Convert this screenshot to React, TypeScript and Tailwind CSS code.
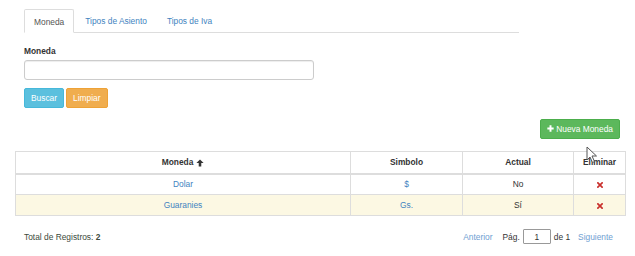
import React from "react";

const rows = [
  { moneda: "Dolar", simbolo: "$", actual: "No", warn: false },
  { moneda: "Guaranies", simbolo: "Gs.", actual: "Sí", warn: true },
];

function RemoveIcon() {
  return (
    <svg width="6" height="6" viewBox="0 0 10 10" className="inline-block">
      <path d="M1.5 1.5 L8.5 8.5 M8.5 1.5 L1.5 8.5" stroke="#c9302c" strokeWidth="2.8" strokeLinecap="square" />
    </svg>
  );
}

function ArrowUp() {
  return (
    <svg width="8" height="8" viewBox="0 0 10 10" className="inline-block ml-[3px] -mt-[1px]">
      <path d="M5 0.5 L9.5 5 L6.6 5 L6.6 9.5 L3.4 9.5 L3.4 5 L0.5 5 Z" fill="#333" />
    </svg>
  );
}

function Plus() {
  return (
    <svg width="7" height="7" viewBox="0 0 10 10" className="inline-block mr-[2px] -mt-[1px]">
      <path d="M3.6 0.5 H6.4 V3.6 H9.5 V6.4 H6.4 V9.5 H3.6 V6.4 H0.5 V3.6 H3.6 Z" fill="#fff" />
    </svg>
  );
}

function Cursor() {
  return (
    <svg width="13" height="18" viewBox="0 0 13 18" className="absolute left-[586px] top-[146px]">
      <path d="M1 1 L1 14 L4 11 L6.5 16.5 L8.5 15.5 L6 10 L10.5 10 Z" fill="#fff" stroke="#555" strokeWidth="1" strokeLinejoin="round" />
    </svg>
  );
}

export default function App() {
  return (
    <div
      className="relative w-[635px] h-[256px] bg-white text-[#333] text-[8.4px] leading-[12px] px-[15px] pt-[9px] overflow-hidden"
      style={{ fontFamily: '"Liberation Sans", Arial, sans-serif' }}
    >
      <div className="pl-[9px]">
        {/* Tabs */}
        <div className="flex w-[495px] h-[24px] border-b border-[#ddd]">
          <div className="h-[24px] px-[9px] pt-[6px] border border-[#ddd] border-b-white bg-white rounded-t-[2px] text-[#555]">
            Moneda
          </div>
          <div className="px-[10px] pt-[6px] ml-[1px] text-[#3f83c0]">Tipos de Asiento</div>
          <div className="px-[10px] pt-[6px] text-[#3f83c0]">Tipos de Iva</div>
        </div>

        {/* Filter form */}
        <label className="block mt-[12px] mb-[3px] font-bold">Moneda</label>
        <div className="w-[290px] h-[20px] border border-[#ccc] rounded-[3px] bg-white shadow-[inset_0_1px_1px_rgba(0,0,0,0.075)]" />

        <div className="flex gap-[2px] mt-[8px]">
          <button className="h-[20px] px-[6px] rounded-[2px] bg-[#5bc0de] border border-[#46b8da] text-white">Buscar</button>
          <button className="h-[20px] px-[6px] rounded-[2px] bg-[#f0ad4e] border border-[#eea236] text-white">Limpiar</button>
        </div>
      </div>

      <div className="flex justify-end mt-[11px]">
        <button className="h-[20px] px-[6px] rounded-[2px] bg-[#5cb85c] border border-[#4cae4c] text-white flex items-center">
          <Plus />
          Nueva Moneda
        </button>
      </div>

      {/* Table */}
      <table className="mt-[12px] w-[610px] table-fixed border-collapse border border-[#ddd]">
        <colgroup>
          <col className="w-[335px]" />
          <col className="w-[112px]" />
          <col className="w-[111px]" />
          <col className="w-[52px]" />
        </colgroup>
        <thead>
          <tr className="h-[22px]">
            <th className="border border-[#ddd] border-b-2 font-bold text-center">
              Moneda
              <ArrowUp />
            </th>
            <th className="border border-[#ddd] border-b-2 font-bold text-center">Simbolo</th>
            <th className="border border-[#ddd] border-b-2 font-bold text-center">Actual</th>
            <th className="border border-[#ddd] border-b-2 font-bold text-center">Eliminar</th>
          </tr>
        </thead>
        <tbody>
          {rows.map((r) => (
            <tr key={r.moneda} className={`h-[21px] ${r.warn ? "bg-[#fcf8e3]" : "bg-white"}`}>
              <td className="border border-[#ddd] text-center text-[#3f83c0]">{r.moneda}</td>
              <td className="border border-[#ddd] text-center text-[#3f83c0]">{r.simbolo}</td>
              <td className="border border-[#ddd] text-center">{r.actual}</td>
              <td className="border border-[#ddd] text-center">
                <RemoveIcon />
              </td>
            </tr>
          ))}
        </tbody>
      </table>

      {/* Footer */}
      <div className="flex items-center justify-between mt-[13px] pl-[9px] pr-[7px]">
        <div className="text-[#3c4a3c]">
          Total de Registros: <span className="font-bold">2</span>
        </div>
        <div className="flex items-center">
          <span className="text-[#6fa0d2]">Anterior</span>
          <span className="ml-[10px]">Pág.</span>
          <div className="ml-[3px] w-[28px] h-[15px] border border-[#999] rounded-[1px] flex items-center justify-center">1</div>
          <span className="ml-[3px]">de 1</span>
          <span className="ml-[8px] text-[#6fa0d2]">Siguiente</span>
        </div>
      </div>

      <Cursor />
    </div>
  );
}
